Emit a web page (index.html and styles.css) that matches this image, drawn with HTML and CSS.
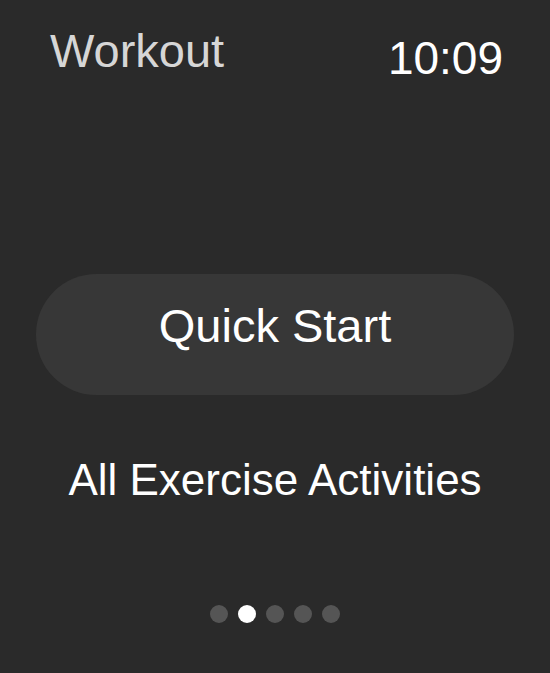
FILE: index.html
```html
<!DOCTYPE html>
<html lang="en">
<head>
<meta charset="utf-8">
<title>Workout</title>
<link rel="stylesheet" href="styles.css">
</head>
<body>
<div class="screen">
  <header class="top-bar">
    <h1 class="app-title">Workout</h1>
    <div class="clock">10:09</div>
  </header>
  <div class="quick-start" role="button">Quick Start</div>
  <div class="all-activities">All Exercise Activities</div>
  <nav class="pager" aria-label="Pages">
    <span class="dot"></span>
    <span class="dot active"></span>
    <span class="dot"></span>
    <span class="dot"></span>
    <span class="dot"></span>
  </nav>
</div>
</body>
</html>
```

FILE: styles.css
```css
html, body {
  margin: 0;
  padding: 0;
  background: #2a2a2a;
}

body {
  width: 550px;
  height: 673px;
  overflow: hidden;
  font-family: "Liberation Sans", Arial, sans-serif;
  color: #ffffff;
}

.screen {
  display: flex;
  flex-direction: column;
  align-items: stretch;
}

.top-bar {
  display: flex;
  justify-content: space-between;
  align-items: flex-start;
  padding: 27px 47px 0 50px;
}

.app-title {
  margin: 0;
  font-size: 47px;
  line-height: 47px;
  font-weight: normal;
  color: #d6d6d6;
}

.clock {
  margin-top: 8px;
  font-size: 46px;
  line-height: 46px;
  color: #ffffff;
}

.quick-start {
  box-sizing: border-box;
  margin: 193px 36px 0 36px;
  height: 121px;
  padding-top: 28px;
  border-radius: 61px;
  background: #373737;
  color: #ffffff;
  font-size: 47px;
  line-height: 47px;
  text-align: center;
}

.all-activities {
  margin-top: 63px;
  font-size: 44px;
  line-height: 44px;
  text-align: center;
  color: #ffffff;
}

.pager {
  display: flex;
  justify-content: center;
  gap: 10px;
  margin-top: 103px;
}

.dot {
  width: 18px;
  height: 18px;
  border-radius: 50%;
  background: #555555;
}

.dot.active {
  background: #ffffff;
}
```
